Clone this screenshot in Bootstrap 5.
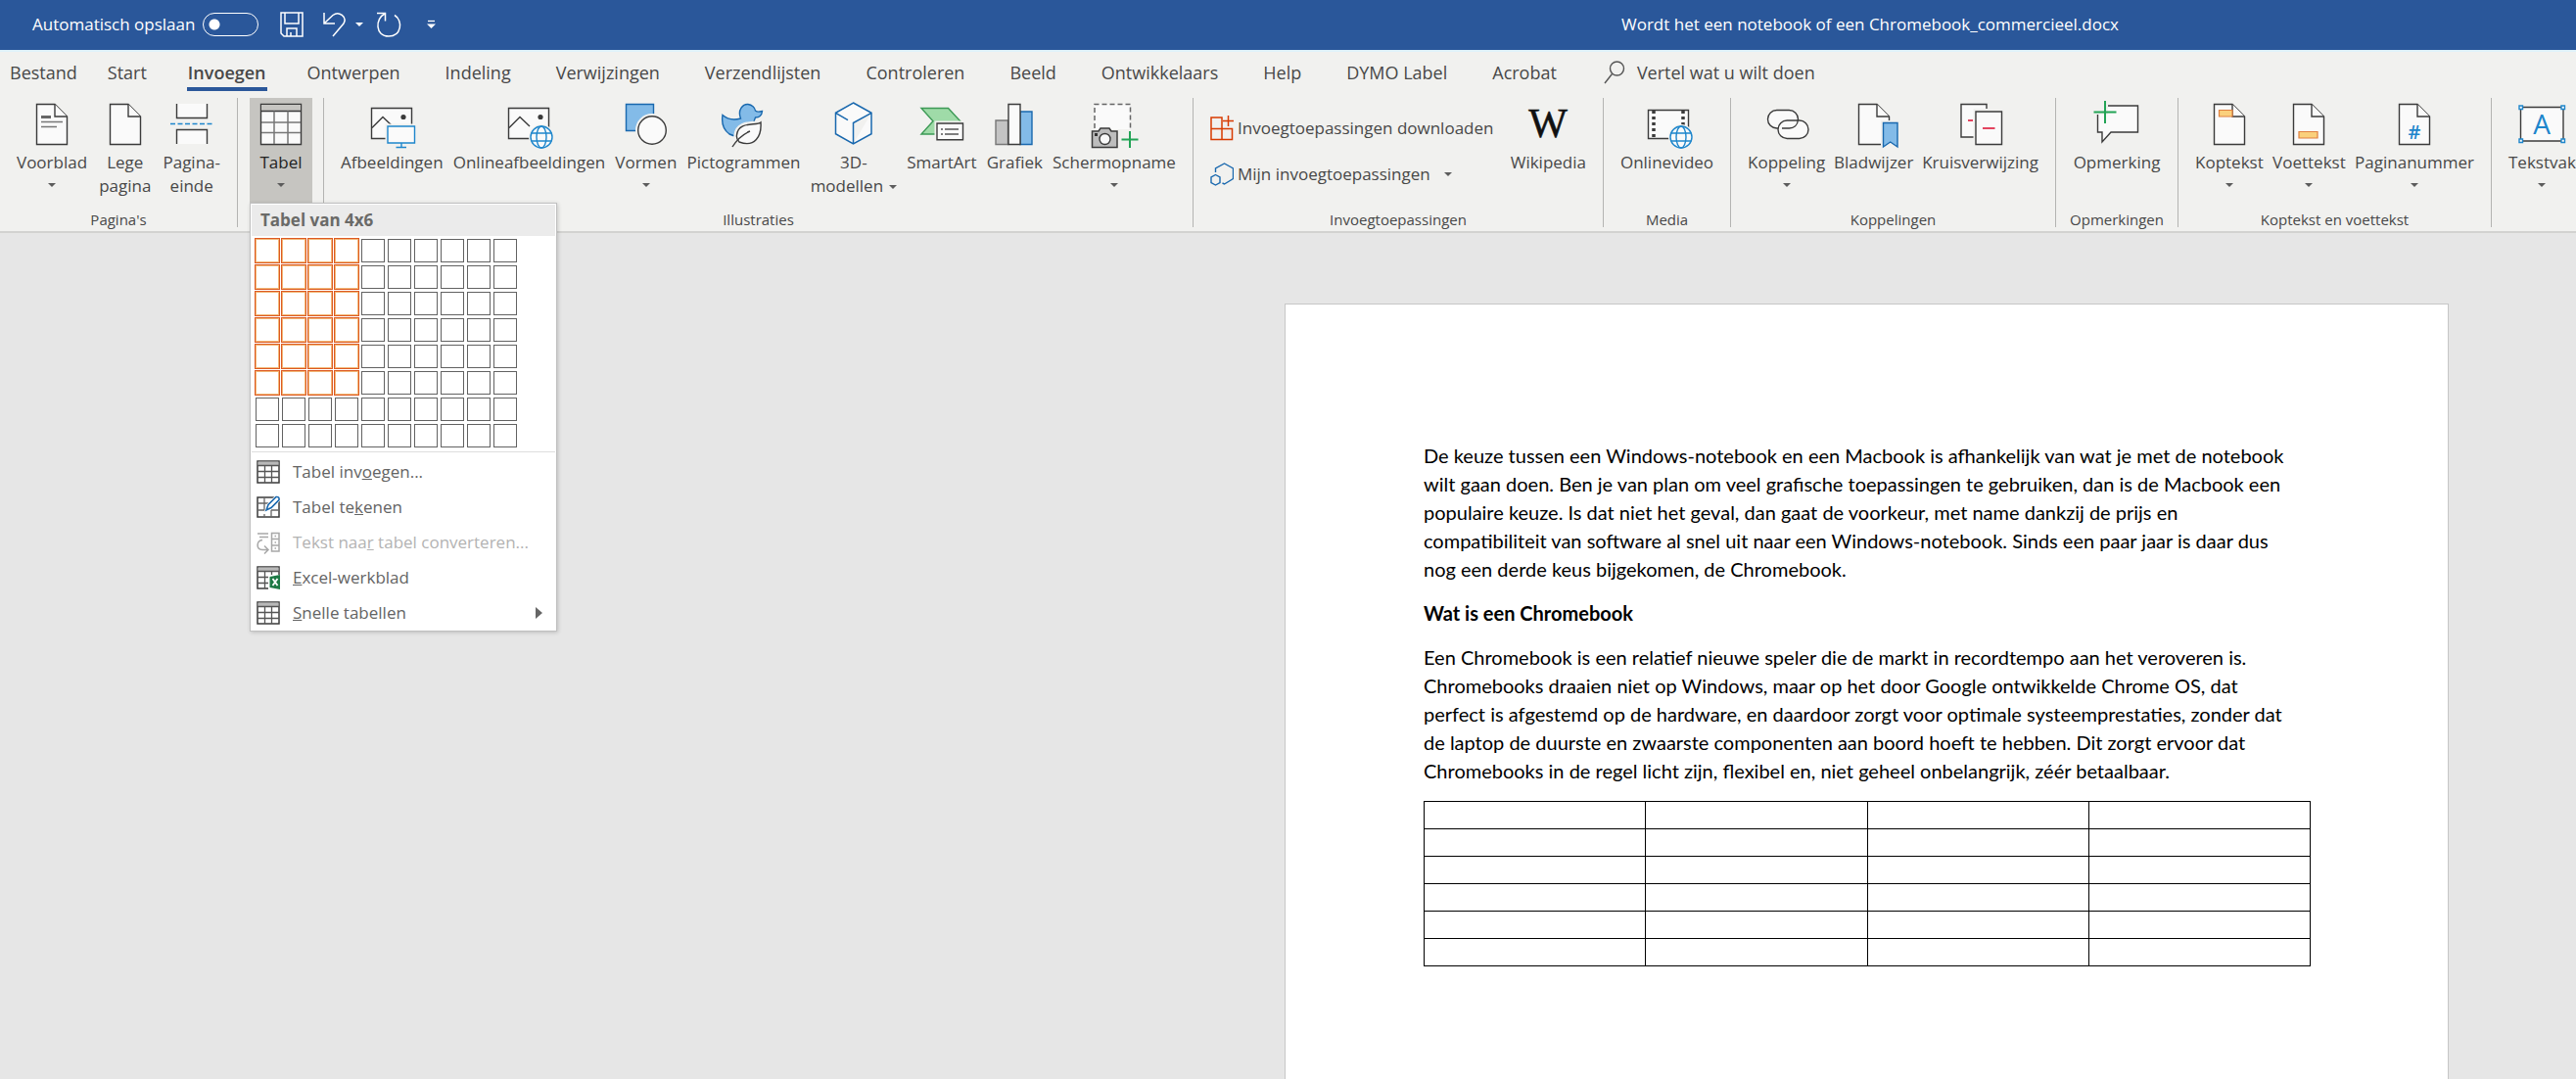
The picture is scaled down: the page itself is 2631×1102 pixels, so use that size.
<!DOCTYPE html>
<html lang="nl">
<head>
<meta charset="utf-8">
<meta name="viewport" content="width=device-width, initial-scale=1">
<title>Wordt het een notebook of een Chromebook_commercieel.docx</title>
<link href="https://cdn.jsdelivr.net/npm/bootstrap@5.3.0/dist/css/bootstrap.min.css" rel="stylesheet">
<style>
  body { font-family: "Open Sans", "Noto Sans", sans-serif; font-size: 17px; line-height: 24px; color: #484848; background: #e6e6e6; }
  button, a.tab-link { color: inherit; }
  .titlebar { display: grid; grid-template-columns: 1320fr 1180fr 131fr; height: 51px; background: #2a579a; color: #fff; padding-bottom: 2px; }
  .titlebar > :first-child { padding-left: 33px; }
  .plain-btn { border: 0; background: none; padding: 0; display: inline-flex; align-items: center; color: inherit; }
  .autosave { width: 57px; height: 24px; margin: 0 22px 0 8px; appearance: none; border: 1px solid #fff; border-radius: 12px; background: radial-gradient(circle at 11px 11px, #fff 5px, transparent 6px); }
  .undo-btn { margin: 0 13px 0 20px; gap: 9px; }
  .custom-btn { margin-left: 26px; }
  .caret { display: inline-block; border: 4px solid transparent; border-top-color: #5c5c5c; border-bottom: 0; }
  .titlebar .caret { border-top-color: #fff; }
  .tabstrip { height: 49px; border-top: 2px solid #e0f2fa; background: #f1f1ef; font-size: 18px; gap: 46px; padding: 6px 10px 0; }
  .tab-link { text-decoration: none; line-height: 30px; border-bottom: 4px solid transparent; white-space: nowrap; }
  .tab-link:first-child { margin-right: -15px; }
  .tab-link.active { font-weight: 600; border-color: #2b579a; padding: 0 1px; margin: 0 -5px; }
  .search-btn { line-height: 30px; gap: 12px; }
  .search-btn svg { margin-left: 2px; }
  .ribbon { display: grid; grid-template-columns: 243fr 88fr 888fr 419fr 130fr 332fr 125fr 320fr 86fr; background: #f1f1ef; border-bottom: 2px solid #d2d2d0; padding-bottom: 4px; }
  .rgroup { display: flex; flex-direction: column; height: 132px; border-right: 1px solid #b4b4b2; min-width: 0; }
  .rgroup:last-child { border-right: 0; }
  .rbuttons { display: flex; justify-content: space-between; align-items: flex-start; padding: 0 17px; flex: 1; }
  .rgroup:last-child .rbuttons { padding-right: 0; justify-content: flex-start; }
  .rlabel { font-size: 15px; line-height: 16px; text-align: center; white-space: nowrap; }
  .rbtn { border: 0; background: none; padding: 4px 0 0; display: flex; flex-direction: column; align-items: center; white-space: nowrap; line-height: 24px; }
  .rbtn svg { width: 48px; height: 48px; margin-bottom: 2px; overflow: visible; }
  .rbtn .caret { margin-top: 9px; }
  .rbtn span .caret { margin: 0 0 3px 6px; }
  .solo { justify-content: center; }
  .tabel-btn { width: 64px; height: 107px; margin-left: 12px; background: #c6c5c1; color: #222; }
  .addins { display: flex; flex-direction: column; gap: 22px; padding-top: 18px; }
  .addins button { gap: 4px; white-space: nowrap; }
  .addins .caret { margin-left: 10px; }
  .k { fill: #fafafa; stroke: #3b3b3b; stroke-width: 1.4; }
  .kn { fill: none; stroke: #3b3b3b; stroke-width: 1.4; }
  .b { fill: #fafafa; stroke: #1e86cc; stroke-width: 1.4; }
  .bn { fill: none; stroke: #1e86cc; stroke-width: 1.4; }
  .bf { fill: #83bbe8; stroke: #1968ae; stroke-width: 1.4; }
  .o { fill: #fad07c; stroke: #e08040; stroke-width: 1.2; }
  .g { fill: none; stroke: #22a355; stroke-width: 2; }
  .halo { fill: #f1f1ef; }

  .table-menu { position: absolute; top: 107px; left: 12px; z-index: 5; width: 314px; background: #fff; border: 1px solid #c0c0c0; box-shadow: 1px 1px 4px rgba(0,0,0,.18); }
  .menu-head { background: #ebebeb; margin: 1px; padding: 0 9px; line-height: 32px; font-weight: 700; color: #6a6a68; }
  .picker { display: grid; grid-template-columns: repeat(10, 24px); gap: 3px; padding: 2px 5px 4px; }
  .picker button { height: 24px; padding: 0; border: 1px solid #626262; background: #fff; }
  .picker button.on { border-color: #f2b878; outline: 1px solid #dd5a22; }
  .menu-line { height: 1px; background: #dedede; margin: 0 1px 2px; }
  .mitem { display: flex; align-items: center; width: 100%; height: 36px; border: 0; background: none; padding: 0 14px 0 6px; gap: 13px; color: #646464; text-align: left; }
  .mitem:disabled { color: #b3b3b3; }
  .mitem svg { flex: none; }

  .workspace { display: grid; grid-template-columns: 1312fr 1189fr 130fr; padding-top: 72px; }
  .sheet { background: #fff; border: 1px solid #c6c6c6; border-bottom: 0; padding: 140px 140px 0 141px; font-family: Lato, sans-serif; font-size: 20px; line-height: 29px; color: #000; }
  .sheet p, .sheet h2 { margin: 0 0 16px; white-space: nowrap; }
  .sheet h2 { font-size: 20px; line-height: 29px; font-weight: 700; }
  .grid-table { width: 100%; table-layout: fixed; border-collapse: collapse; }
  .grid-table td { border: 1px solid #000; height: 28px; padding: 0; }
</style>
<script src="https://cdn.jsdelivr.net/npm/bootstrap@5.3.0/dist/js/bootstrap.bundle.min.js"></script>
</head>
<body class="d-flex flex-column min-vh-100">
<svg width="0" height="0" class="position-absolute" aria-hidden="true">
  <symbol id="page" viewBox="0 0 48 48"><path class="k" d="M8.5 2.5H27L39.5 15V43.5H8.5z"/><path class="k" d="M27 2.5V15H39.5"/></symbol>
  <symbol id="photo" viewBox="0 0 48 48"><path class="k" d="M3.500 6.500H44.500V37.500H3.500z"/><path class="kn" d="M4 26.500L15 15.500 25 25"/><circle cx="36" cy="15.500" r="2.600" fill="#3b3b3b"/></symbol>
  <symbol id="globe" viewBox="-14 -14 28 28"><circle class="halo" r="13"/><circle class="b" r="11"/><ellipse class="bn" rx="5" ry="11"/><path class="bn" d="M-10.500 -4H10.500M-10.500 4H10.500"/></symbol>
  <symbol id="mtable" viewBox="0 0 24 24"><path d="M1 1H23V23H1z" fill="#fff" stroke="#3b3b3b" stroke-width="1.500"/><path d="M1.500 1.500h21v3.500h-21z" fill="#b9b9b9"/><path d="M1 5.500H23M1 11.500H23M1 17.500H23M8.500 5.500V23M15.500 5.500V23" fill="none" stroke="#555" stroke-width="1.300"/></symbol>
</svg>

<header>
  <div class="titlebar">
    <div class="d-flex align-items-center">
      <label for="autosave">Automatisch opslaan</label>
      <input class="autosave" type="checkbox" role="switch" id="autosave">
      <button class="plain-btn" aria-label="Opslaan"><svg width="24" height="26" viewBox="0 0 24 26" fill="none" stroke="#fff" stroke-width="1.500"><path d="M1 1H23V25H4L1 22zM5 1V12H19V1M7 25V17H17V25M11 25V21"/></svg></button>
      <button class="plain-btn undo-btn" aria-label="Ongedaan maken"><svg width="24" height="26" viewBox="0 0 24 26" fill="none" stroke="#fff" stroke-width="1.500"><path d="M1 1V12H12M1.500 11.500L10 3.500C16 -1 25 5 21 12L10 25"/></svg><span class="caret"></span></button>
      <button class="plain-btn" aria-label="Opnieuw"><svg width="26" height="26" viewBox="0 0 26 26" fill="none" stroke="#fff" stroke-width="1.500"><path d="M1 1.500H9.500V9.500M9 2C-1 7 -1 25 13 25 26 25 28 9 19 3.500"/></svg></button>
      <button class="plain-btn custom-btn" aria-label="Werkbalk aanpassen"><svg width="9" height="10" viewBox="0 0 9 10"><path d="M1 1.500H8" stroke="#fff" stroke-width="1.300"/><path d="M0 4.500H9L4.500 9z" fill="#fff"/></svg></button>
    </div>
    <div class="d-flex align-items-center justify-content-center text-nowrap">Wordt het een notebook of een Chromebook_commercieel.docx</div>
  </div>
  <nav class="tabstrip d-flex align-items-start">
    <a class="tab-link" href="#">Bestand</a>
    <a class="tab-link" href="#">Start</a>
    <a class="tab-link active" href="#">Invoegen</a>
    <a class="tab-link" href="#">Ontwerpen</a>
    <a class="tab-link" href="#">Indeling</a>
    <a class="tab-link" href="#">Verwijzingen</a>
    <a class="tab-link" href="#">Verzendlijsten</a>
    <a class="tab-link" href="#">Controleren</a>
    <a class="tab-link" href="#">Beeld</a>
    <a class="tab-link" href="#">Ontwikkelaars</a>
    <a class="tab-link" href="#">Help</a>
    <a class="tab-link" href="#">DYMO Label</a>
    <a class="tab-link" href="#">Acrobat</a>
    <button class="plain-btn search-btn text-nowrap"><svg width="22" height="24" viewBox="0 0 22 24" fill="none" stroke="#555" stroke-width="1.400"><circle cx="13.500" cy="8" r="7"/><path d="M8.500 13.500L1 23"/></svg>Vertel wat u wilt doen</button>
  </nav>

  <div class="ribbon">
    <section class="rgroup">
      <div class="rbuttons">
        <button class="rbtn"><svg viewBox="0 0 48 48"><use href="#page"/><path d="M13 15.500H23" stroke="#666" stroke-width="3"/><path d="M13 20.500H35M13 25.500H29" stroke="#777" stroke-width="1.500"/></svg>Voorblad<i class="caret"></i></button>
        <button class="rbtn"><svg viewBox="0 0 48 48"><use href="#page"/></svg>Lege<br>pagina</button>
        <button class="rbtn"><svg viewBox="0 0 48 48"><path class="k" d="M8.500 2V16.500H39.500V2M8.500 43V28.500H39.500V43"/><path d="M2 22.500H46" stroke="#1e86cc" stroke-width="1.500" stroke-dasharray="5 2.500"/></svg>Pagina-<br>einde</button>
      </div>
      <div class="rlabel">Pagina's</div>
    </section>
    <section class="rgroup position-relative">
      <button class="rbtn tabel-btn" aria-expanded="true"><svg viewBox="0 0 48 48"><path class="k" d="M3.500 2.500H44.500V43.500H3.500z"/><path d="M4 3h40v6H4z" fill="#c6c5c1"/><path class="kn" d="M3.500 9.500H44.500"/><path d="M4 21H44M4 31.500H44M17 9.500V43M31 9.500V43" stroke="#777" stroke-width="1.500"/></svg>Tabel<i class="caret"></i></button>
      <div class="table-menu">
        <div class="menu-head">Tabel van 4x6</div>
        <div class="picker" id="picker"></div>
        <div class="menu-line"></div>
        <button class="mitem"><svg width="24" height="24"><use href="#mtable"/></svg><span>Tabel inv<u>o</u>egen...</span></button>
        <button class="mitem"><svg width="24" height="24" viewBox="0 0 24 24"><path d="M1 2H23V22H1z" fill="#fff" stroke="#3b3b3b" stroke-width="1.500"/><path d="M1 8H16M1 15H9M8 2V15M15 15V22M15 15H23M8 19V22" fill="none" stroke="#666" stroke-width="1.300"/><path d="M10 15L12 9.500 20 1.500Q23 .5 23.500 4L15 12.500z" fill="#fff" stroke="#fff" stroke-width="3"/><path d="M10 15L12 9.500 20 1.500Q23.500 1 23 4.500L15 12.500z" fill="#fff" stroke="#1968ae" stroke-width="1.600"/></svg><span>Tabel te<u>k</u>enen</span></button>
        <button class="mitem" disabled><svg width="24" height="24" viewBox="0 0 24 24" fill="none" stroke="#a8a8a8" stroke-width="1.500"><path d="M1 3H12M3 6.500H12M6 9.500C0 10 -1 19 6 19.500H11M8 15.500L12 19.500 8 23.500M15.500 2.500H23V21H15.500zM15.500 8.500H23M15.500 15H23M18.500 5.500H20M18.500 12H20M18.500 18H20"/></svg><span>Tekst naa<u>r</u> tabel converteren...</span></button>
        <button class="mitem"><svg width="24" height="24" viewBox="0 0 24 24"><use href="#mtable"/><path d="M12 9H24V24H12z" fill="#fff"/><path d="M13.500 11L24 9V24L13.500 22z" fill="#1e7a46"/><path d="M16.500 13L21.500 20M21.500 13L16.500 20" stroke="#fff" stroke-width="1.800"/></svg><span><u>E</u>xcel-werkblad</span></button>
        <button class="mitem"><svg width="24" height="24"><use href="#mtable"/></svg><span><u>S</u>nelle tabellen</span><svg class="ms-auto" width="7" height="12" viewBox="0 0 7 12"><path d="M0 0L7 6 0 12z" fill="#666"/></svg></button>
      </div>
    </section>
    <section class="rgroup">
      <div class="rbuttons">
        <button class="rbtn"><svg viewBox="0 0 48 48"><use href="#photo"/><path class="halo" d="M17.500 22.500H48V44H17.500z"/><path class="b" d="M20 25H47.500V42H20z"/><path class="bn" d="M34 42V46.500M28.500 46.500H39"/></svg>Afbeeldingen</button>
        <button class="rbtn"><svg viewBox="0 0 48 48"><use href="#photo"/><use href="#globe" x="23" y="22" width="28" height="28"/></svg>Onlineafbeeldingen</button>
        <button class="rbtn"><svg viewBox="0 0 48 48"><path class="bf" d="M3.500 2.500H31.500V29.500H3.500z"/><circle class="halo" cx="30" cy="29" r="17"/><circle class="k" cx="30" cy="29" r="14.300"/></svg>Vormen<i class="caret"></i></button>
        <button class="rbtn"><svg viewBox="0 0 48 48"><path class="bf" d="M3 13.500C8 18 14 19 21.500 17 18 8 24 2 29 2.500 33 3 36 6 36.500 9 39 11 41 10 43.500 9.500 43 14 40 16 36.500 16 34 22 34 24 33 27 28 34 18 37 10 33 3 28 2 20 3 13.500z"/><path d="M42 21C38 25 19 19 17.500 34 17 37 18 39 20 41 36 47 43 35 42 21zM13 46L20 38" fill="#f1f1ef" stroke="#f1f1ef" stroke-width="6"/><path class="k" d="M42 21C38 25 19 19 17.500 34 17 37 18 39 20 41 36 47 43 35 42 21z"/><path class="kn" d="M13 46C18 38 24 33 31 30"/></svg>Pictogrammen</button>
        <button class="rbtn"><svg viewBox="0 0 48 48"><path d="M23.500 1L42 11.300V32.700L23.500 43 5.500 32.700V11.300zM5.500 11.300L18 18.700M42 11.300L23.500 21.500V43" fill="#fafafa" stroke="#1968ae" stroke-width="1.500"/></svg>3D-<span>modellen<i class="caret"></i></span></button>
        <button class="rbtn"><svg viewBox="0 0 48 48"><path d="M3 6.500H30.500L43 20 32 33H3L15 19.700z" fill="#9fdba8" stroke="#3d9a56" stroke-width="1.400"/><path class="halo" d="M16.500 19.500H48V41H16.500z"/><path class="k" d="M19 22H45.500V38.700H19z"/><path d="M23 28H25M27 28H41M23 33H25M27 33H41" stroke="#555" stroke-width="1.300"/></svg>SmartArt</button>
        <button class="rbtn"><svg viewBox="0 0 48 48"><path d="M5 19H17.500V43.500H5z" fill="#c4c4c4" stroke="#777" stroke-width="1.400"/><path class="bf" d="M30 10H42V43.500H30z"/><path class="k" d="M18 2.500H30V43.500H18z"/></svg>Grafiek</button>
        <button class="rbtn"><svg viewBox="0 0 48 48"><path d="M4 2.500H40.500V28H4z" fill="#fafafa"/><path d="M4 27V2.500H40.500V27" fill="none" stroke="#666" stroke-width="1.500" stroke-dasharray="5 3"/><path d="M1.500 30H8L10 27H19L21 30H27V46.500H1.500z" fill="#bdbdbd" stroke="#3b3b3b" stroke-width="1.500"/><circle class="k" cx="14.500" cy="38" r="5.500"/><path d="M4 32H7V35H4z" fill="#333"/><path class="g" d="M31.500 38.500H48.500M40 30V47"/></svg>Schermopname<i class="caret"></i></button>
      </div>
      <div class="rlabel">Illustraties</div>
    </section>
    <section class="rgroup">
      <div class="rbuttons">
        <div class="addins">
          <button class="plain-btn"><svg width="24" height="26" viewBox="0 0 24 26" fill="none" stroke="#d83b01" stroke-width="1.500"><path d="M1 2H12V24.500H1zM1 13.500H22.500V24.500H12M18.500 0V11M13 5.500H24"/></svg>Invoegtoepassingen downloaden</button>
          <button class="plain-btn"><svg width="24" height="24" viewBox="0 0 24 24" fill="none" stroke="#1968ae" stroke-width="1.400"><path d="M5.500 10V6L14.500 1 23.500 6V16.500L14.500 22 12.500 21"/><path d="M5.500 12.500L10 15V20.500L5.500 23 1 20.500V15z"/></svg>Mijn invoegtoepassingen<i class="caret"></i></button>
        </div>
        <button class="rbtn"><svg viewBox="0 0 48 48"><text x="24" y="36" text-anchor="middle" font-family="Liberation Serif, serif" font-size="42" fill="#111" stroke="#111" stroke-width=".6">W</text></svg>Wikipedia</button>
      </div>
      <div class="rlabel">Invoegtoepassingen</div>
    </section>
    <section class="rgroup">
      <div class="rbuttons solo">
        <button class="rbtn"><svg viewBox="0 0 48 48"><path class="k" d="M4.500 8.500H45.500V37.500H4.500z"/><path d="M10 9V37M40 9V25" stroke="#3b3b3b" stroke-width="3.500" stroke-dasharray="3 3"/><use href="#globe" x="24" y="22" width="28" height="28"/></svg>Onlinevideo</button>
      </div>
      <div class="rlabel">Media</div>
    </section>
    <section class="rgroup">
      <div class="rbuttons">
        <button class="rbtn"><svg viewBox="0 0 48 48"><rect class="k" x="4.500" y="8.500" width="31" height="18.500" rx="9.200"/><rect class="k" x="15" y="19" width="31" height="18.500" rx="9.200"/><path d="M19 27H26.500C31 27 35 24 35.500 18" fill="none" stroke="#3b3b3b" stroke-width="1.400"/><path d="M32 19H38M15.500 25V31" stroke="#fafafa" stroke-width="0"/></svg>Koppeling<i class="caret"></i></button>
        <button class="rbtn"><svg viewBox="0 0 48 48"><use href="#page"/><path class="halo" d="M31 19H50V48H31z"/><path class="bf" d="M33.500 21.500H48V46L40.700 41 33.500 46z"/></svg>Bladwijzer</button>
        <button class="rbtn"><svg viewBox="0 0 48 48"><path class="k" d="M4 2.500H30V36H4z"/><path d="M11 19H16" stroke="#e0304e" stroke-width="1.800"/><path class="halo" d="M16.500 7H48V46H16.500z"/><path class="k" d="M19 10H45.500V43.500H19z"/><path d="M26 27H38.500" stroke="#e0304e" stroke-width="1.800"/></svg>Kruisverwijzing</button>
      </div>
      <div class="rlabel">Koppelingen</div>
    </section>
    <section class="rgroup">
      <div class="rbuttons solo">
        <button class="rbtn"><svg viewBox="0 0 48 48"><path class="k" d="M4.500 4H45.500V31H18L9 41V31H4.500z"/><path class="halo" d="M0 0H15V13H0z"/><path class="g" d="M.5 10.500H23.500M12 -1V22"/></svg>Opmerking</button>
      </div>
      <div class="rlabel">Opmerkingen</div>
    </section>
    <section class="rgroup">
      <div class="rbuttons">
        <button class="rbtn"><svg viewBox="0 0 48 48"><use href="#page"/><path class="o" d="M27 8.500H13.500V15H27z"/></svg>Koptekst<i class="caret"></i></button>
        <button class="rbtn"><svg viewBox="0 0 48 48"><use href="#page"/><path class="o" d="M14 30.500H33V37H14z"/></svg>Voettekst<i class="caret"></i></button>
        <button class="rbtn"><svg viewBox="0 0 48 48"><use href="#page"/><text x="24" y="38" text-anchor="middle" font-size="20" font-weight="600" fill="#1e86cc">#</text></svg>Paginanummer<i class="caret"></i></button>
      </div>
      <div class="rlabel">Koptekst en voettekst</div>
    </section>
    <section class="rgroup">
      <div class="rbuttons">
        <button class="rbtn"><svg viewBox="0 0 48 48"><path class="k" d="M2.500 5.500H46V40H2.500z"/><path class="b" d="M1 4H4.500V7.500H1zM44 4H47.500V7.500H44zM1 38H4.500V41.500H1zM44 38H47.500V41.500H44z"/><text x="24" y="33" text-anchor="middle" font-size="28" fill="#1e86cc">A</text></svg>Tekstvak<i class="caret"></i></button>
      </div>
    </section>
  </div>
</header>

<main class="workspace flex-grow-1">
  <div></div>
  <article class="sheet">
    <p>De keuze tussen een Windows-notebook en een Macbook is afhankelijk van wat je met de notebook<br>wilt gaan doen. Ben je van plan om veel grafische toepassingen te gebruiken, dan is de Macbook een<br>populaire keuze. Is dat niet het geval, dan gaat de voorkeur, met name dankzij de prijs en<br>compatibiliteit van software al snel uit naar een Windows-notebook. Sinds een paar jaar is daar dus<br>nog een derde keus bijgekomen, de Chromebook.</p>
    <h2>Wat is een Chromebook</h2>
    <p>Een Chromebook is een relatief nieuwe speler die de markt in recordtempo aan het veroveren is.<br>Chromebooks draaien niet op Windows, maar op het door Google ontwikkelde Chrome OS, dat<br>perfect is afgestemd op de hardware, en daardoor zorgt voor optimale systeemprestaties, zonder dat<br>de laptop de duurste en zwaarste componenten aan boord hoeft te hebben. Dit zorgt ervoor dat<br>Chromebooks in de regel licht zijn, flexibel en, niet geheel onbelangrijk, zéér betaalbaar.</p>
    <table class="grid-table"><tbody>
      <tr><td></td><td></td><td></td><td></td></tr>
      <tr><td></td><td></td><td></td><td></td></tr>
      <tr><td></td><td></td><td></td><td></td></tr>
      <tr><td></td><td></td><td></td><td></td></tr>
      <tr><td></td><td></td><td></td><td></td></tr>
      <tr><td></td><td></td><td></td><td></td></tr>
    </tbody></table>
  </article>
</main>
<script>
  // 10 x 8 size picker; the chosen size is 4 columns by 6 rows
  const picker = document.getElementById('picker');
  for (let r = 1; r <= 8; r++) for (let c = 1; c <= 10; c++) {
    const cell = document.createElement('button');
    cell.setAttribute('aria-label', c + 'x' + r);
    if (c <= 4 && r <= 6) cell.className = 'on';
    picker.append(cell);
  }
</script>
</body>
</html>
